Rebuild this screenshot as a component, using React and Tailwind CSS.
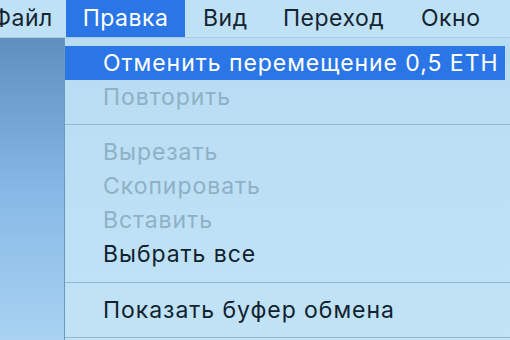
import React from 'react';

const font = { fontFamily: '"Inter", "Noto Sans", sans-serif' };

function MenuRow({ label, disabled, active }) {
    return (
        <div
            className={`h-[34px] flex items-center pl-[38px] text-[23px] tracking-[0.95px] whitespace-nowrap ${active ? 'bg-[#2b76e7] text-white mr-[5px]' : disabled ? 'text-[#8eb1c6]' : 'text-[#10222f]'}`}
        >
            {label}
        </div>
    );
}

function Separator({ className = '' }) {
    return <div className={`h-[1px] bg-[#93b7cc] my-[10px] ${className}`} />;
}

export default function App() {
    return (
        <div className="w-[510px] h-[340px] overflow-hidden flex flex-col bg-[#bde0f5]" style={font}>
            {/* menu bar */}
            <div className="h-[38px] flex items-stretch bg-[#bfe1f5] text-[23px] tracking-[0.5px] text-[#142431] border-b border-[#a9cbe0] shrink-0">
                <div className="ml-[-8px] w-[74px] flex items-center">Файл</div>
                <div className="w-[119px] bg-[#2b76e7] text-white flex items-center justify-center">Правка</div>
                <div className="ml-[18px] w-[80px] flex items-center">Вид</div>
                <div className="w-[138px] flex items-center">Переход</div>
                <div className="flex items-center">Окно</div>
            </div>

            <div className="flex-1 flex min-h-0">
                {/* desktop */}
                <div className="w-[64px] shrink-0 bg-gradient-to-b from-[#5e90bf] via-[#86b8e6] to-[#a9d2f1]" />
                {/* dropdown */}
                <div className="flex-1 border-l border-[#6c98bb] bg-gradient-to-b from-[#b7dcf3] to-[#c2e3f6] pt-[8px] overflow-hidden">
                    <MenuRow label="Отменить перемещение 0,5 ETH" active />
                    <MenuRow label="Повторить" disabled />
                    <Separator />
                    <MenuRow label="Вырезать" disabled />
                    <MenuRow label="Скопировать" disabled />
                    <MenuRow label="Вставить" disabled />
                    <MenuRow label="Выбрать все" />
                    <Separator className="mt-[11px]" />
                    <MenuRow label="Показать буфер обмена" />
                    <Separator />
                </div>
            </div>
        </div>
    );
}
